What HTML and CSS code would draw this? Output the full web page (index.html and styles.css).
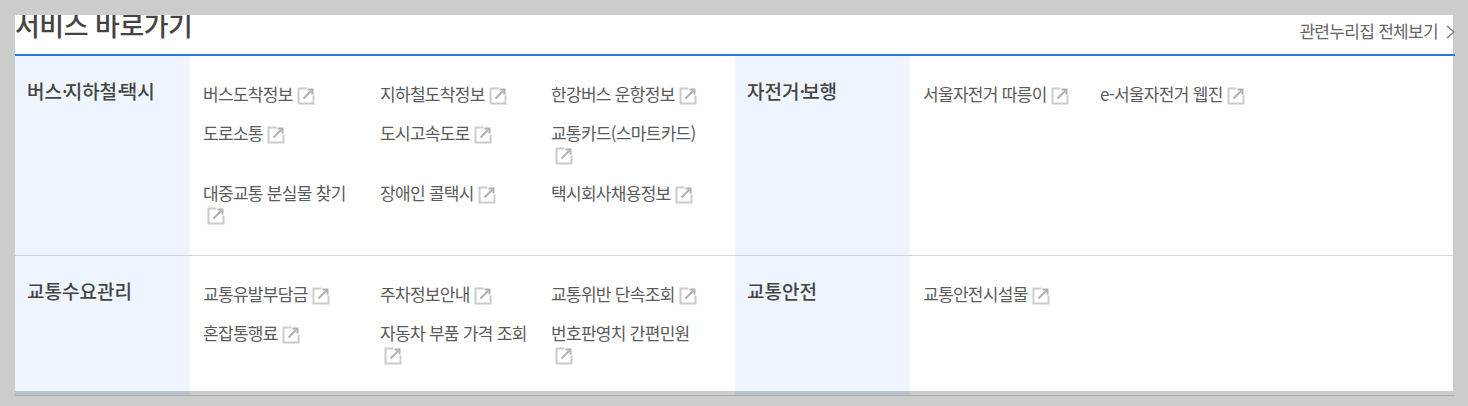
FILE: index.html
```html
<!DOCTYPE html>
<html lang="ko">
<head>
    <meta charset="UTF-8">
    <title>서비스 바로가기</title>
    <link rel="stylesheet" href="styles.css">
</head>
<body>
    <svg class="sprite" width="0" height="0">
        <symbol id="ext" viewBox="0 0 18 18">
            <path d="M9.5 1.5H1.5V16.5H16.5V8.5" fill="none" stroke="#cccccc" stroke-width="2"/>
            <path d="M6.5 11.5L14.5 3.5" fill="none" stroke="#b0b0b0" stroke-width="2"/>
            <path d="M10.5 2.5H15.5V7.5" fill="none" stroke="#b0b0b0" stroke-width="2"/>
        </symbol>
    </svg>
    <div class="panel">
        <div class="title-row">
            <h2 class="title">서비스 바로가기</h2>
            <a class="all-link" href="#">관련누리집 전체보기
                <svg class="chevron" width="9" height="14" viewBox="0 0 9 14"><path d="M1 1L8 7L1 13" fill="none" stroke="#777" stroke-width="1.2"/></svg>
            </a>
        </div>
        <div class="board">
            <section class="group">
                <h3 class="group-name">버스<span class="dot">·</span>지하철<span class="dot">·</span>택시</h3>
                <ul class="links">
                    <li><a href="#">버스도착정보<svg class="ext"><use href="#ext"/></svg></a></li>
                    <li><a href="#">지하철도착정보<svg class="ext"><use href="#ext"/></svg></a></li>
                    <li><a href="#">한강버스 운항정보<svg class="ext"><use href="#ext"/></svg></a></li>
                    <li><a href="#">도로소통<svg class="ext"><use href="#ext"/></svg></a></li>
                    <li><a href="#">도시고속도로<svg class="ext"><use href="#ext"/></svg></a></li>
                    <li><a href="#">교통카드(스마트카드)<svg class="ext"><use href="#ext"/></svg></a></li>
                    <li><a href="#">대중교통 분실물 찾기<svg class="ext"><use href="#ext"/></svg></a></li>
                    <li><a href="#">장애인 콜택시<svg class="ext"><use href="#ext"/></svg></a></li>
                    <li><a href="#">택시회사채용정보<svg class="ext"><use href="#ext"/></svg></a></li>
                </ul>
            </section>
            <section class="group">
                <h3 class="group-name">자전거<span class="dot">·</span>보행</h3>
                <ul class="links">
                    <li><a href="#">서울자전거 따릉이<svg class="ext"><use href="#ext"/></svg></a></li>
                    <li><a href="#">e-서울자전거 웹진<svg class="ext"><use href="#ext"/></svg></a></li>
                </ul>
            </section>
            <section class="group">
                <h3 class="group-name">교통수요관리</h3>
                <ul class="links">
                    <li><a href="#">교통유발부담금<svg class="ext"><use href="#ext"/></svg></a></li>
                    <li><a href="#">주차정보안내<svg class="ext"><use href="#ext"/></svg></a></li>
                    <li><a href="#">교통위반 단속조회<svg class="ext"><use href="#ext"/></svg></a></li>
                    <li><a href="#">혼잡통행료<svg class="ext"><use href="#ext"/></svg></a></li>
                    <li><a href="#">자동차 부품 가격 조회<svg class="ext"><use href="#ext"/></svg></a></li>
                    <li><a href="#">번호판영치 간편민원<svg class="ext"><use href="#ext"/></svg></a></li>
                </ul>
            </section>
            <section class="group">
                <h3 class="group-name">교통안전</h3>
                <ul class="links">
                    <li><a href="#">교통안전시설물<svg class="ext"><use href="#ext"/></svg></a></li>
                </ul>
            </section>
        </div>
        <div class="fade-strip"></div>
    </div>
</body>
</html>
```

FILE: styles.css
```css
html, body {
    height: 100%;
}
body {
    margin: 0;
    padding: 15px 0 0 15px;
    box-sizing: border-box;
    background: #cccccc;
    font-family: "Noto Sans CJK KR", "Noto Sans", sans-serif;
    color: #5a5a5a;
    overflow: hidden;
}
a {
    color: inherit;
    text-decoration: none;
}
ul {
    list-style: none;
    margin: 0;
    padding: 0;
}
.sprite {
    position: absolute;
}
.panel {
    width: 1440px;
}
.title-row {
    width: 1438px;
    height: 39px;
    background: #fff;
    display: flex;
    justify-content: space-between;
}
.title {
    margin: -9px 0 0;
    font-size: 27px;
    line-height: 38px;
    font-weight: 500;
    letter-spacing: -0.5px;
    color: #444444;
    clip-path: inset(9px 0 0 0);
}
.all-link {
    margin: 4px -2px 0 0;
    font-size: 17px;
    line-height: 24px;
    letter-spacing: -0.7px;
    color: #666666;
    white-space: nowrap;
}
.chevron {
    margin-left: 4px;
    vertical-align: -1px;
}
.board {
    width: 1440px;
    display: grid;
    grid-template-columns: 720px 718px;
    grid-template-rows: 200px 135px;
    border-top: 2px solid #2f77d9;
}
.group {
    display: flex;
    min-width: 0;
    overflow: hidden;
    background: #fff;
}
.group:nth-child(-n+2) {
    border-bottom: 1px solid #d4d4d4;
}
.group-name {
    flex: none;
    box-sizing: border-box;
    width: 175px;
    margin: 0;
    padding: 22px 0 0 12px;
    background: #eef5fe;
    font-size: 19px;
    line-height: 26px;
    font-weight: 500;
    color: #444444;
}
.dot {
    letter-spacing: -3px;
}
.links {
    flex: 1;
    min-width: 0;
    box-sizing: border-box;
    padding: 27px 25px 0 13px;
    display: grid;
    grid-template-columns: 177px 171px 159px;
    grid-auto-rows: min-content;
    row-gap: 17px;
    font-size: 17px;
    line-height: 21px;
    letter-spacing: -0.7px;
    word-break: keep-all;
}
.links li {
    padding-right: 14px;
}
.links li:nth-child(3n) {
    padding-right: 0;
}
.ext {
    display: inline-block;
    width: 18px;
    height: 18px;
    margin-left: 4px;
    vertical-align: -4px;
}
.fade-strip {
    width: 1440px;
    height: 5px;
    box-sizing: border-box;
    border-bottom: 1px solid #a3acb6;
    background: linear-gradient(to right, #bcc3cf 175px, #cccccc 175px, #cccccc 720px, #bcc3cf 720px, #bcc3cf 895px, #cccccc 895px);
}
```
